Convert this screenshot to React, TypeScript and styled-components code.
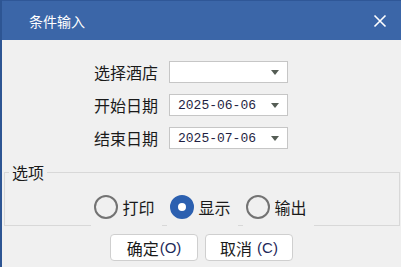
import React from 'react'
import styled, { createGlobalStyle } from 'styled-components'

const GlobalStyle = createGlobalStyle`
    html, body {
        margin: 0;
        padding: 0;
        background: #f0f0f0;
    }
    * {
        box-sizing: border-box;
    }
`

const SWindow = styled.div`
    width: 401px;
    height: 267px;
    display: flex;
    flex-direction: column;
    background: #f0f0f0;
    border-left: 2px solid #2d5593;
    font-family: "Noto Sans CJK SC", "Microsoft YaHei", sans-serif;
    color: #1a1a1a;
    overflow: hidden;
`

const STitleBar = styled.div`
    height: 40px;
    flex: none;
    display: flex;
    align-items: center;
    justify-content: space-between;
    padding: 0 14px 0 27px;
    background: #3b66a8;
    border-top: 1px solid #2f5797;
    color: #ffffff;
    font-size: 14px;
`

const SClose = styled.span`
    display: flex;
    width: 14px;
    height: 14px;
`

const SForm = styled.div`
    display: flex;
    flex-direction: column;
    gap: 11px;
    padding: 21px 0 0 92px;
`

const SRow = styled.div`
    display: flex;
    align-items: center;
    gap: 11px;
    height: 22px;
`

const SLabel = styled.span`
    width: 64px;
    font-size: 16px;
    line-height: 22px;
    white-space: nowrap;
`

const SSelect = styled.div`
    width: 119px;
    height: 22px;
    display: flex;
    align-items: center;
    justify-content: space-between;
    padding: 0 8px 0 8px;
    background: #ffffff;
    border: 1px solid #c6c6c6;
    font-family: "Liberation Mono", monospace;
    font-size: 13px;
    color: #1e1e42;
`

const SArrow = styled.span`
    width: 0;
    height: 0;
    border-left: 4px solid transparent;
    border-right: 4px solid transparent;
    border-top: 5px solid #555d55;
    margin-top: 1px;
`

const SGroup = styled.fieldset`
    margin: 12px 1px 0 2px;
    padding: 11px 0 0 0;
    border: 1px solid #d8d8d8;
    min-width: 0;
`

const SLegend = styled.legend`
    margin-left: 4px;
    padding: 0 3px;
    font-size: 16px;
    line-height: 22px;
`

const SRadioRow = styled.div`
    display: flex;
    justify-content: center;
    gap: 5px;
    margin-bottom: -1px;
`

const SRadioItem = styled.label`
    width: 71px;
    height: 32px;
    display: flex;
    align-items: center;
    gap: 5px;
    padding: 0 0 6px 3px;
    background: #f0f0f0;
    font-size: 16px;
`

const SCircle = styled.span<{ $checked?: boolean }>`
    width: 24px;
    height: 24px;
    flex: none;
    border-radius: 50%;
    display: flex;
    align-items: center;
    justify-content: center;
    border: ${p => (p.$checked ? '8px solid #2c60b0' : '2px solid #737373')};
    background: ${p => (p.$checked ? '#ffffff' : 'transparent')};
`

const SButtons = styled.div`
    display: flex;
    justify-content: center;
    gap: 7px;
    margin-top: 8px;
`

const SButton = styled.button`
    width: 88px;
    height: 27px;
    padding: 0;
    background: #ffffff;
    border: 1px solid #cfcfcf;
    border-radius: 4px;
    font-family: "Noto Sans CJK SC", sans-serif;
    font-size: 16px;
    color: #1a1a1a;
    display: flex;
    align-items: center;
    justify-content: center;
`

const SKey = styled.span<{ $gap?: number }>`
    font-family: "Liberation Sans", sans-serif;
    font-size: 15px;
    color: #1d2858;
    margin-left: ${p => p.$gap ?? 1}px;
`

const fields = [
    { label: '选择酒店', value: '' },
    { label: '开始日期', value: '2025-06-06' },
    { label: '结束日期', value: '2025-07-06' },
]

const options = [
    { label: '打印', checked: false },
    { label: '显示', checked: true },
    { label: '输出', checked: false },
]

export default function App() {
    return (
        <>
            <GlobalStyle />
            <SWindow>
                <STitleBar>
                    <span>条件输入</span>
                    <SClose>
                        <svg width="14" height="14" viewBox="0 0 14 14">
                            <path d="M1.5 1.5 L12.5 12.5 M12.5 1.5 L1.5 12.5" stroke="#ffffff" strokeWidth="1.6" fill="none" />
                        </svg>
                    </SClose>
                </STitleBar>

                <SForm>
                    {fields.map(f => (
                        <SRow key={f.label}>
                            <SLabel>{f.label}</SLabel>
                            <SSelect>
                                <span>{f.value}</span>
                                <SArrow />
                            </SSelect>
                        </SRow>
                    ))}
                </SForm>

                <SGroup>
                    <SLegend>选项</SLegend>
                    <SRadioRow>
                        {options.map(o => (
                            <SRadioItem key={o.label}>
                                <SCircle $checked={o.checked} />
                                <span>{o.label}</span>
                            </SRadioItem>
                        ))}
                    </SRadioRow>
                </SGroup>

                <SButtons>
                    <SButton>确定<SKey>(O)</SKey></SButton>
                    <SButton>取消<SKey $gap={5}>(C)</SKey></SButton>
                </SButtons>
            </SWindow>
        </>
    )
}
